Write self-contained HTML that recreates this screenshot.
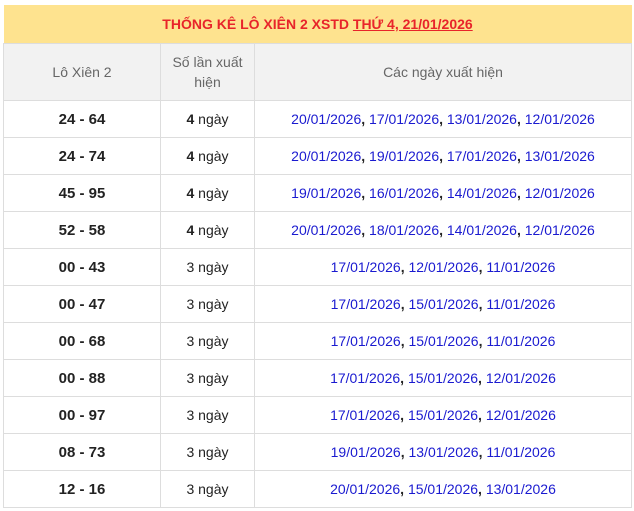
<!DOCTYPE html>
<html><head><meta charset="utf-8"><style>
body{margin:0;background:#fff;font-family:"Liberation Sans",Arial,sans-serif;}
table{position:absolute;left:3px;top:5px;width:629px;border-collapse:collapse;table-layout:fixed;}
td,th{border:1px solid #ddd;text-align:center;padding:0;font-size:14px;}
.t{background:#fee38f;color:#e8242a;font-weight:bold;height:38px;border:none;border-bottom:1px solid #ddd;font-size:14px;}
.t u{text-decoration:underline;}
.h th{background:#f2f2f2;color:#666;font-weight:normal;height:56px;line-height:20px;}
tr.r td{height:36px;color:#222;}
td.a{font-weight:bold;font-size:15px;}
.d{color:#1a1ad0;}
.c{font-weight:bold;color:#222;}
</style></head><body>
<table>
<col style="width:157px"><col style="width:94px"><col>
<tr><td class="t" colspan="3">THỐNG KÊ LÔ XIÊN 2 XSTD <u>THỨ 4, 21/01/2026</u></td></tr>
<tr class="h"><th>Lô Xiên 2</th><th>Số lần xuất<br>hiện</th><th>Các ngày xuất hiện</th></tr>
<tr class="r"><td class="a">24 - 64</td><td><b>4</b> ngày</td><td><span class="d">20/01/2026</span><span class="c">, </span><span class="d">17/01/2026</span><span class="c">, </span><span class="d">13/01/2026</span><span class="c">, </span><span class="d">12/01/2026</span></td></tr>
<tr class="r"><td class="a">24 - 74</td><td><b>4</b> ngày</td><td><span class="d">20/01/2026</span><span class="c">, </span><span class="d">19/01/2026</span><span class="c">, </span><span class="d">17/01/2026</span><span class="c">, </span><span class="d">13/01/2026</span></td></tr>
<tr class="r"><td class="a">45 - 95</td><td><b>4</b> ngày</td><td><span class="d">19/01/2026</span><span class="c">, </span><span class="d">16/01/2026</span><span class="c">, </span><span class="d">14/01/2026</span><span class="c">, </span><span class="d">12/01/2026</span></td></tr>
<tr class="r"><td class="a">52 - 58</td><td><b>4</b> ngày</td><td><span class="d">20/01/2026</span><span class="c">, </span><span class="d">18/01/2026</span><span class="c">, </span><span class="d">14/01/2026</span><span class="c">, </span><span class="d">12/01/2026</span></td></tr>
<tr class="r"><td class="a">00 - 43</td><td>3 ngày</td><td><span class="d">17/01/2026</span><span class="c">, </span><span class="d">12/01/2026</span><span class="c">, </span><span class="d">11/01/2026</span></td></tr>
<tr class="r"><td class="a">00 - 47</td><td>3 ngày</td><td><span class="d">17/01/2026</span><span class="c">, </span><span class="d">15/01/2026</span><span class="c">, </span><span class="d">11/01/2026</span></td></tr>
<tr class="r"><td class="a">00 - 68</td><td>3 ngày</td><td><span class="d">17/01/2026</span><span class="c">, </span><span class="d">15/01/2026</span><span class="c">, </span><span class="d">11/01/2026</span></td></tr>
<tr class="r"><td class="a">00 - 88</td><td>3 ngày</td><td><span class="d">17/01/2026</span><span class="c">, </span><span class="d">15/01/2026</span><span class="c">, </span><span class="d">12/01/2026</span></td></tr>
<tr class="r"><td class="a">00 - 97</td><td>3 ngày</td><td><span class="d">17/01/2026</span><span class="c">, </span><span class="d">15/01/2026</span><span class="c">, </span><span class="d">12/01/2026</span></td></tr>
<tr class="r"><td class="a">08 - 73</td><td>3 ngày</td><td><span class="d">19/01/2026</span><span class="c">, </span><span class="d">13/01/2026</span><span class="c">, </span><span class="d">11/01/2026</span></td></tr>
<tr class="r"><td class="a">12 - 16</td><td>3 ngày</td><td><span class="d">20/01/2026</span><span class="c">, </span><span class="d">15/01/2026</span><span class="c">, </span><span class="d">13/01/2026</span></td></tr>
</table>
</body></html>
